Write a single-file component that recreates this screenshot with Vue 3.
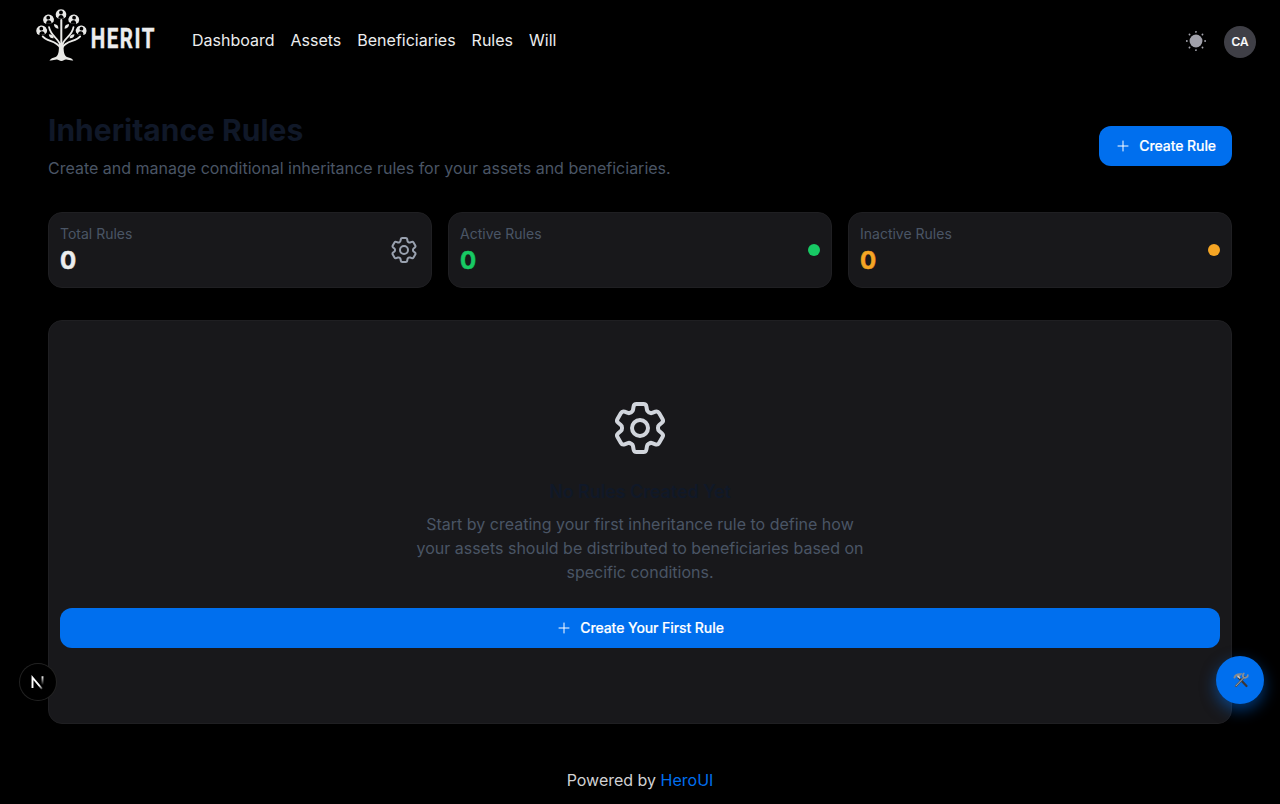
<script setup>
const links = ['Dashboard', 'Assets', 'Beneficiaries', 'Rules', 'Will']
const stats = [
  { label: 'Total Rules', value: 0, tone: 'plain' },
  { label: 'Active Rules', value: 0, tone: 'green' },
  { label: 'Inactive Rules', value: 0, tone: 'amber' },
]
const people = [
  { x: 31, y: 13.1, r: 0 },
  { x: 18.3, y: 18.3, r: -20 },
  { x: 44, y: 18.3, r: 20 },
  { x: 11.4, y: 29.3, r: -25 },
  { x: 51.4, y: 29.3, r: 25 },
]
const gear =
  'M9.594 3.94c.09-.542.56-.94 1.11-.94h2.593c.55 0 1.02.398 1.11.94l.213 1.281c.063.374.313.686.645.87.074.04.147.083.22.127.325.196.72.257 1.075.124l1.217-.456a1.125 1.125 0 0 1 1.37.49l1.296 2.247a1.125 1.125 0 0 1-.26 1.431l-1.003.827c-.293.241-.438.613-.43.992a7.723 7.723 0 0 1 0 .255c-.008.378.137.75.43.991l1.004.827c.424.35.534.955.26 1.43l-1.298 2.247a1.125 1.125 0 0 1-1.369.491l-1.217-.456c-.355-.133-.75-.072-1.076.124a6.47 6.47 0 0 1-.22.128c-.331.183-.581.495-.644.869l-.213 1.281c-.09.543-.56.94-1.11.94h-2.594c-.55 0-1.019-.398-1.11-.94l-.213-1.281c-.062-.374-.312-.686-.644-.87a6.52 6.52 0 0 1-.22-.127c-.325-.196-.72-.257-1.076-.124l-1.217.456a1.125 1.125 0 0 1-1.369-.49l-1.297-2.247a1.125 1.125 0 0 1 .26-1.431l1.004-.827c.292-.24.437-.613.43-.991a6.932 6.932 0 0 1 0-.255c.007-.38-.138-.751-.43-.992l-1.004-.827a1.125 1.125 0 0 1-.26-1.43l1.297-2.247a1.125 1.125 0 0 1 1.37-.491l1.216.456c.356.133.751.072 1.076-.124.072-.044.146-.086.22-.128.332-.183.582-.495.644-.869l.214-1.28Z M15 12a3 3 0 1 1-6 0 3 3 0 0 1 6 0Z'
</script>

<template>
  <div class="page">
    <nav class="nav">
      <svg class="logo" width="150" height="70" viewBox="0 0 150 70">
        <g v-for="p in people" :key="p.x" :transform="`translate(${p.x} ${p.y}) rotate(${p.r / 3})`">
          <path d="M-4.200 3.400A4.600 4.600 0 1 1 4.200 3.400L2.700 4.600H-2.700Z" fill="#e9e9e7" stroke="#e9e9e7" stroke-width="1.600" stroke-linejoin="round" />
          <circle cy="-.6" r="1.900" fill="#000" />
          <path d="M-2.800 5.500Q-2.600 1.900 0 1.900T2.800 5.500Z" fill="#000" />
        </g>
        <g fill="none" stroke="#e9e9e7" stroke-linecap="round">
          <path d="M31.3 20V54" stroke-width="2" />
          <path d="M30.5 46C29 38 21 37 19 27M32 46C33 38 42 37 43.5 27" stroke-width="1.700" />
          <path d="M30.5 48C26 40 17 42 12.7 36.4M32 48C36 40 46 42 50.2 36.4" stroke-width="1.800" />
        </g>
        <g fill="#e9e9e7">
          <path d="M29 43h4.5c0 9 .4 13 4.2 14.3 2.2.8 4.2 1 5.6 3.1-3.3.3-5.2-1-7.5-.8-1.5.1-2.6 1.4-4.4 1.4s-3-1.3-4.6-1.4c-2.4-.1-4.2 1.3-7.4.8 1.6-2 3.4-2.3 5.5-3.1C28.700 56 29 52 29 43z" />
          <path d="M24 24q4.500 .3 4.400 4.700q-4.500-.3-4.400-4.700zM39 24q-4.500 .3-4.400 4.700q4.500-.3 4.400-4.700zM18.800 34.200q4.500 0 4.900 4q-4.500 .4-4.900-4zM44.500 34.200q-4.500 0-4.900 4q4.500 .4 4.900-4z" />
        </g>
        <text transform="translate(60.800 48.200) scale(.76 1)">HERIT</text>
      </svg>
      <ul class="links">
        <li v-for="l in links" :key="l">{{ l }}</li>
      </ul>
      <svg class="sun" width="22" height="22" viewBox="0 0 24 24" fill="currentColor">
        <path d="M19 12a7 7 0 11-7-7 7 7 0 017 7z" />
        <path d="M12 22.96a.969.969 0 01-1-.96v-.08a1 1 0 012 0 1.038 1.038 0 01-1 1.04zm7.14-2.82a1.024 1.024 0 01-.71-.29l-.13-.13a1 1 0 011.41-1.41l.13.13a1 1 0 010 1.41.984.984 0 01-.7.29zm-14.28 0a1.024 1.024 0 01-.71-.29 1 1 0 010-1.41l.13-.13a1 1 0 011.41 1.41l-.13.13a1 1 0 01-.7.29zM22 13h-.08a1 1 0 010-2 1.038 1.038 0 011.04 1 .969.969 0 01-.96 1zM2.080 13H2a1 1 0 010-2 1.038 1.038 0 011.04 1 .969.969 0 01-.96 1zm16.93-7.01a1.024 1.024 0 01-.71-.29 1 1 0 010-1.41l.13-.13a1 1 0 011.41 1.41l-.13.13a.984.984 0 01-.7.29zm-14.02 0a1.024 1.024 0 01-.71-.29l-.13-.14a1 1 0 011.41-1.41l.13.13a1 1 0 010 1.41.97.97 0 01-.7.3zM12 3.04a.969.969 0 01-1-.96V2a1 1 0 012 0 1.038 1.038 0 01-1 1.04z" />
      </svg>
      <div class="avatar">CA</div>
    </nav>

    <main class="main">
      <header class="head">
        <div>
          <h1>Inheritance Rules</h1>
          <p>Create and manage conditional inheritance rules for your assets and beneficiaries.</p>
        </div>
        <button class="btn">
          <svg width="16" height="16" viewBox="0 0 24 24"><path d="M12 4.500v15m7.500-7.500h-15" /></svg>
          Create Rule
        </button>
      </header>

      <section class="stats">
        <div v-for="s in stats" :key="s.label" class="card stat" :class="s.tone">
          <div>
            <div class="label">{{ s.label }}</div>
            <div class="value">{{ s.value }}</div>
          </div>
          <svg v-if="s.tone === 'plain'" class="gear" width="32" height="32" viewBox="0 0 24 24"><path :d="gear" /></svg>
          <span v-else class="dot"></span>
        </div>
      </section>

      <section class="card empty">
        <svg class="gear big" width="64" height="64" viewBox="0 0 24 24"><path :d="gear" /></svg>
        <h3>No Rules Created Yet</h3>
        <p>Start by creating your first inheritance rule to define how your assets should be distributed to beneficiaries based on specific conditions.</p>
        <button class="btn wide">
          <svg width="16" height="16" viewBox="0 0 24 24"><path d="M12 4.500v15m7.500-7.500h-15" /></svg>
          Create Your First Rule
        </button>
      </section>
    </main>

    <footer class="foot">Powered by&nbsp;<span>HeroUI</span></footer>

    <div class="next">
      <svg width="36" height="36" viewBox="0 0 36 36">
        <defs>
          <linearGradient id="diag" x1="18" y1="18" x2="23" y2="25" gradientUnits="userSpaceOnUse">
            <stop offset=".4" stop-color="#fff" /><stop offset="1" stop-color="#fff" stop-opacity=".15" />
          </linearGradient>
          <linearGradient id="stem" x1="0" y1="12" x2="0" y2="21" gradientUnits="userSpaceOnUse">
            <stop stop-color="#fff" /><stop offset="1" stop-color="#fff" stop-opacity="0" />
          </linearGradient>
        </defs>
        <path d="M12.500 24V13.500L22 24.800" fill="none" stroke="url(#diag)" stroke-width="1.900" />
        <path d="M22.500 12.300V22" stroke="url(#stem)" stroke-width="1.900" />
      </svg>
    </div>
    <div class="tools">
      <svg width="16" height="16" viewBox="0 0 16 16" fill="none" stroke-linecap="round">
        <path d="M5.500 5.500 13.500 14" stroke="#3b3536" stroke-width="2.200" />
        <path d="M11.500 5 3 14" stroke="#4b5157" stroke-width="2.200" />
        <path d="M11 5.500 3 13.800" stroke="#a3a9ae" stroke-width="1" />
        <path d="M10.800 1.500Q9 3.500 10.500 5.200T14.500 4.700L14.800 3.200" stroke="#8a8f94" stroke-width="1.700" />
        <path d="M1.500 5.500Q2.500 2 7.500 2.200L5 4.800" stroke="#85898e" stroke-width="2" />
        <path d="M5 4.200 6.700 6" stroke="#c6cacc" stroke-width="1.500" />
      </svg>
    </div>
  </div>
</template>

<style>
body {
  background: #000;
}
</style>

<style scoped>
* {
  box-sizing: border-box;
}
.page {
  position: relative;
  display: flex;
  flex-direction: column;
  height: 804px;
  overflow: hidden;
  background: #000;
  color: #ecedee;
  font: 16px/24px Inter, sans-serif;
}
h1, h3, p, ul {
  margin: 0;
  padding: 0;
}
.nav {
  display: flex;
  align-items: center;
  height: 80px;
  padding: 0 24px 0 30px;
}
.logo {
  align-self: flex-start;
  overflow: visible;
  font: 700 27px/32px Roboto, sans-serif;
  letter-spacing: 2px;
  fill: #ecedee;
}
.logo text {
  stroke: #ecedee;
  stroke-width: 0.4px;
}
.links {
  display: flex;
  gap: 16px;
  margin-left: 12px;
  list-style: none;
}
.sun {
  margin: 2px 17px 0 auto;
  color: #a1a1aa;
}
.avatar {
  width: 32px;
  height: 32px;
  margin-top: 4px;
  border-radius: 50%;
  background: #3f3f46;
  color: #fff;
  font-size: 12px;
  font-weight: 500;
  line-height: 32px;
  text-align: center;
  -webkit-text-stroke: 0.2px #fff;
}
.main {
  padding: 32px 48px 0;
}
.head {
  display: flex;
  align-items: center;
  justify-content: space-between;
  color: #4a5565;
}
h1 {
  margin-bottom: 8px;
  color: #101828;
  font-size: 30px;
  line-height: 36px;
}
.btn {
  display: flex;
  align-items: center;
  justify-content: center;
  gap: 8px;
  height: 40px;
  padding: 0 16px;
  border: 0;
  border-radius: 12px;
  background: #006fee;
  color: #fff;
  font: 500 14px/20px Inter, sans-serif;
  letter-spacing: -0.08px;
  -webkit-text-stroke: 0.15px #fff;
}
.btn svg,
.gear {
  fill: none;
  stroke: currentColor;
  stroke-width: 1.5;
  stroke-linecap: round;
  stroke-linejoin: round;
}
.stats {
  display: grid;
  grid-template-columns: repeat(3, 1fr);
  gap: 16px;
  margin: 32px 0;
}
.card {
  border: 1px solid #1f1f22;
  border-radius: 14px;
  background: #18181b;
}
.stat {
  display: flex;
  align-items: center;
  justify-content: space-between;
  height: 76px;
  padding: 0 11px;
}
.label {
  color: #4a5565;
  font-size: 14px;
  line-height: 20px;
}
.value {
  padding-top: 1px;
  font-size: 24px;
  font-weight: 700;
  line-height: 31px;
  -webkit-text-stroke: 0.5px currentColor;
}
.gear {
  color: #99a1af;
}
.green .value {
  color: #17c964;
}
.amber .value {
  color: #f5a524;
}
.dot {
  width: 12px;
  height: 12px;
  border-radius: 50%;
  background: #17c964;
}
.amber .dot {
  background: #f5a524;
}
.empty {
  display: flex;
  flex-direction: column;
  align-items: center;
  height: 404px;
  padding: 75px 11px 0;
  text-align: center;
}
.empty .big {
  color: #d1d5dc;
}
h3 {
  margin: 18px 0 6px;
  color: #101828;
  font-size: 18px;
  font-weight: 600;
  line-height: 28px;
  letter-spacing: -0.1px;
}
.empty p {
  width: 448px;
  margin-bottom: 24px;
  color: #4a5565;
}
.wide {
  width: 100%;
}
.foot {
  display: flex;
  justify-content: center;
  margin-top: 44px;
  color: #d0d0d3;
}
.foot span {
  color: #006fee;
}
.next {
  position: absolute;
  left: 20px;
  top: 664px;
  width: 36px;
  height: 36px;
  border-radius: 50%;
  background: #000;
  box-shadow: 0 0 0 1px #222;
}
.tools {
  position: absolute;
  left: 1216px;
  top: 656px;
  display: flex;
  align-items: center;
  justify-content: center;
  width: 48px;
  height: 48px;
  padding-left: 2px;
  border-radius: 50%;
  background: #006fee;
  box-shadow: 0 6px 15px rgba(0, 111, 238, 0.5);
}
</style>
